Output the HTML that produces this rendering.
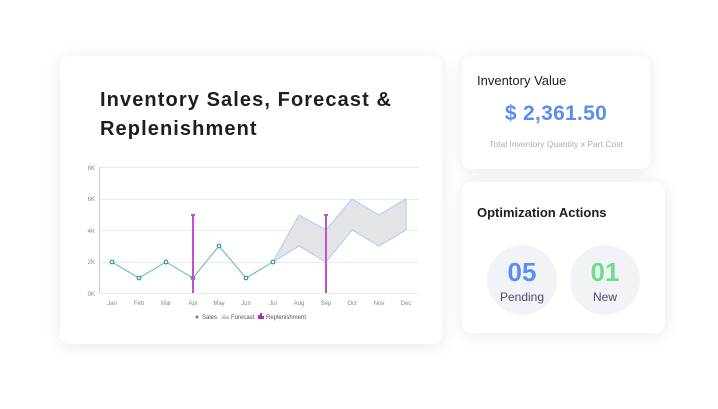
<!DOCTYPE html>
<html><head><style>
body{margin:0;width:718px;height:409px;background:#fff;font-family:"Liberation Sans",sans-serif;position:relative;overflow:hidden}
.card{position:absolute;background:#fff;border-radius:10px;box-shadow:0 2px 18px rgba(0,0,0,0.09)}
.t{position:absolute;color:#1d1d22}
.circ{position:absolute;width:70px;height:70px;border-radius:50%;background:#f1f3f6;text-align:center}
.circ b{display:block;font-size:26px;margin-top:12px;font-weight:bold}
.circ span{display:block;font-size:12px;color:#4a4f63;margin-top:2px}
</style></head><body>
<div class="card" style="left:60px;top:56px;width:382px;height:288px"></div>
<div class="card" style="left:462px;top:56px;width:188px;height:113px"></div>
<div class="card" style="left:462px;top:182px;width:203px;height:151px"></div>
<div class="t" style="left:100px;top:86px;font-size:20px;line-height:29px;font-weight:bold;letter-spacing:1.1px">Inventory Sales, Forecast &amp;<br>Replenishment</div>
<div class="t" style="left:477px;top:73px;font-size:13px">Inventory Value</div>
<div style="position:absolute;left:462px;width:188px;top:102px;text-align:center;font-size:21px;font-weight:bold;color:#5b8df2;letter-spacing:0.3px">$ 2,361.50</div>
<div style="position:absolute;left:462px;width:188px;top:139px;text-align:center;font-size:8.5px;color:#a9acb8">Total Inventory Quantity x Part Cost</div>
<div class="t" style="left:477px;top:205px;font-size:13px;font-weight:bold">Optimization Actions</div>
<div class="circ" style="left:487px;top:245px"><b style="color:#5b8df2">05</b><span>Pending</span></div>
<div class="circ" style="left:570px;top:245px"><b style="color:#6fdc8a">01</b><span>New</span></div>
<svg style="position:absolute;left:0;top:0" width="718" height="409" font-family="Liberation Sans,sans-serif">
<g stroke="#eaeaea" stroke-width="1">
<line x1="99" y1="167.5" x2="419" y2="167.5"/><line x1="99" y1="199.5" x2="419" y2="199.5"/><line x1="99" y1="230.5" x2="419" y2="230.5"/><line x1="99" y1="262.5" x2="419" y2="262.5"/><line x1="99" y1="293.5" x2="419" y2="293.5"/>
</g>
<line x1="99.5" y1="167" x2="99.5" y2="293" stroke="#ccc"/>
<g font-size="6" fill="#888" text-anchor="end">
<text x="95" y="170">8K</text><text x="95" y="201">6K</text><text x="95" y="233">4K</text><text x="95" y="264">2K</text><text x="95" y="296">0K</text>
</g>
<g font-size="6" fill="#888" text-anchor="middle">
<text x="112" y="305">Jan</text><text x="139" y="305">Feb</text><text x="166" y="305">Mar</text><text x="193" y="305">Apr</text><text x="219" y="305">May</text><text x="246" y="305">Jun</text><text x="273" y="305">Jul</text><text x="299" y="305">Aug</text><text x="326" y="305">Sep</text><text x="352" y="305">Oct</text><text x="379" y="305">Nov</text><text x="406" y="305">Dec</text>
</g>
<polygon points="273,262 299,215 326,230 352,199 379,215 406,199 406,230 379,246 352,230 326,262 299,246" fill="#e3e4e6" stroke="#a9cbf5" stroke-width="1"/>
<polyline points="112,262 139,278 166,262 193,278 219,246 246,278 273,262" fill="none" stroke="#5fb8b3" stroke-width="1"/>
<g fill="#fff" stroke="#2f9a94" stroke-width="1.2">
<circle cx="112" cy="262" r="1.8"/><circle cx="139" cy="278" r="1.8"/><circle cx="166" cy="262" r="1.8"/><circle cx="193" cy="278" r="1.8"/><circle cx="219" cy="246" r="1.8"/><circle cx="246" cy="278" r="1.8"/><circle cx="273" cy="262" r="1.8"/>
</g>
<g stroke="#c44fcf" stroke-width="2"><line x1="193" y1="215" x2="193" y2="293"/><line x1="326" y1="215" x2="326" y2="293"/><line x1="191" y1="215" x2="195" y2="215"/><line x1="324" y1="215" x2="328" y2="215"/></g>
<circle cx="197" cy="317" r="1.5" fill="#2f9a94"/>
<text x="202" y="319" font-size="6" fill="#555">Sales</text>
<polygon points="221,319 224,314 226,317 228,315 230,319" fill="#ccc"/>
<text x="231" y="319" font-size="6" fill="#555">Forecast</text>
<rect x="258" y="315" width="2" height="4" fill="#b02fb8"/><rect x="260" y="313" width="2" height="6" fill="#b02fb8"/><rect x="262" y="316" width="2" height="3" fill="#b02fb8"/>
<text x="266" y="319" font-size="6" fill="#555">Replenishment</text>
</svg>
</body></html>
